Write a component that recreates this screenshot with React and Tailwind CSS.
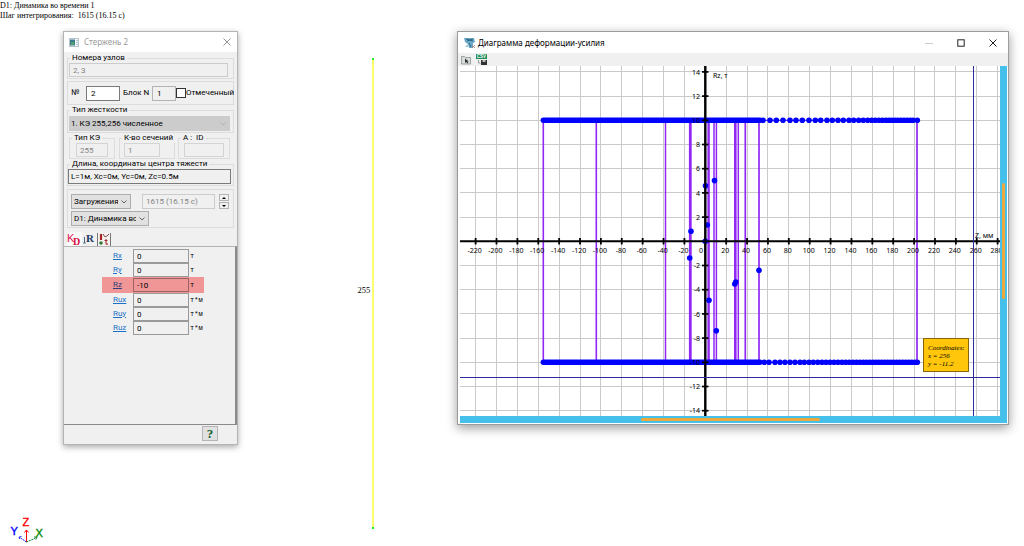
import { useState } from "react";

const forces = [
  { name: "Rx", value: "0", unit: "т" },
  { name: "Ry", value: "0", unit: "т" },
  { name: "Rz", value: "-10", unit: "т", active: true },
  { name: "Rux", value: "0", unit: "т*м" },
  { name: "Ruy", value: "0", unit: "т*м" },
  { name: "Ruz", value: "0", unit: "т*м" },
];

// Chart geometry, in viewBox units
const X0 = 245.3;
const Y0 = 175.3;
const STEP_X = 20.88;
const STEP_Y = 24.2;
const TOP = Y0 - 5 * STEP_Y;
const BOTTOM = Y0 + 5 * STEP_Y;

const xTicks = Array.from({ length: 26 }, (_, i) => (i - 11) * 20);
const yTicks = Array.from({ length: 15 }, (_, i) => (i - 7) * 2);

const loops = [
  { x: 83.3, w: 1.6 },
  { x: 136.3, w: 1.6 },
  { x: 205.5, w: 1.5 },
  { x: 230.3, w: 2.8 },
  { x: 248.6, w: 2.4 },
  { x: 254, w: 1.5 },
  { x: 256.4, w: 1.5 },
  { x: 275.3, w: 2.6 },
  { x: 278.3, w: 1.5 },
  { x: 285.3, w: 1.7 },
  { x: 299, w: 1.7 },
  { x: 457, w: 1.7 },
];

const points = [
  [245.5, 119.8],
  [254.5, 114.6],
  [247.3, 159],
  [231, 165.3],
  [245.3, 175.3],
  [229.7, 192],
  [249, 234.3],
  [256.3, 264.7],
  [274.8, 218],
  [275.8, 216],
  [299, 204.3],
];

const topDots = [
  303, 310, 316.3, 323, 330, 336, 342.3, 349, 355.3, 360.7, 367, 372.3, 378,
  383.3, 389, 393.7, 398.7, 403.3, 407.7, 411.7, 415.3, 419, 422.5, 426, 429,
  432, 435, 438, 441, 444, 447, 450, 453, 457.3,
];

const bottomDots = [
  304.3, 309, 315, 320, 325, 330, 335, 340, 344.3, 349, 353.3, 357.7, 362,
  366, 370, 374, 378, 382, 385.7, 389.3, 393, 396.5, 400, 403.3, 406.5, 409.7,
  412.7, 415.7, 418.7, 421.7, 424.7, 427.7, 430.7, 433.7, 436.7, 439.7, 442.7,
  445.7, 448.7, 451.7, 454.7, 457.3,
];

const Group = ({ title, className = "", children }) => (
  <fieldset className={`min-w-0 border border-[#dcdcdc] pb-px ${className}`}>
    <legend className="ml-[2px] whitespace-pre px-[2px] leading-[10px]">
      {title}
    </legend>
    {children}
  </fieldset>
);

const Select = ({ label, options, className = "" }) => (
  <div className={`relative ${className}`}>
    <select
      aria-label={label}
      className="block h-full w-full appearance-none overflow-hidden border border-[#adadad] bg-[#e1e1e1] pl-[2px] pr-3 leading-none"
    >
      {options.map((o) => (
        <option key={o}>{o}</option>
      ))}
    </select>
    <svg
      viewBox="0 0 6 4"
      className="pointer-events-none absolute right-1 top-1/2 h-1 w-[6px] -translate-y-1/2"
    >
      <path d="M.5 .5 3 3 5.5 .5" fill="none" stroke="#555" strokeWidth=".9" />
    </svg>
  </div>
);

const RodWindow = () => {
  const [marked, setMarked] = useState(false);

  return (
    <section className="absolute left-[63px] top-[31px] flex w-[175px] flex-col border border-[#b4b4b4] bg-[#f0f0f0] font-['Roboto',sans-serif] text-[8px] leading-[10px] text-black shadow-[0_2px_6px_rgba(0,0,0,0.35)]">
      <header className="flex h-5 items-center bg-white px-[5px] text-[#999]">
        <svg viewBox="0 0 10 9" className="h-[9px] w-[10px]">
          <rect x=".5" y=".5" width="9" height="8" fill="#f4f8fa" stroke="#b8c4cc" />
          <rect x="1" y="1.5" width="5" height="6" fill="#3b7a8c" />
          <rect x="2" y="4" width="3" height="3" fill="#52a06c" />
          <path d="M7 2.5h2M7 4.5h2M7 6.5h2" stroke="#9fb6c4" strokeWidth=".8" />
        </svg>
        <h2 className="ml-[5px] font-['Noto_Sans',sans-serif]">Стержень 2</h2>
        <button aria-label="Закрыть" className="ml-auto p-px">
          <svg viewBox="0 0 8 8" className="h-2 w-2">
            <path d="M.5 .5 7.5 7.5M7.5 .5 .5 7.5" stroke="#888" strokeWidth=".9" />
          </svg>
        </button>
      </header>

      <div className="px-[3px] pt-px">
        <Group title="Номера узлов">
          <input
            aria-label="Номера узлов"
            defaultValue="2, 3"
            disabled
            className="ml-px mr-1 block h-[14px] w-[159px] border border-[#ccc] px-[3px] text-[#838383]"
          />
        </Group>

        <div className="mt-[2px] flex h-6 items-center border border-[#dcdcdc] pl-[3px]">
          <label className="flex items-center">
            <span className="w-[15px]">№</span>
            <input
              defaultValue="2"
              className="h-[15px] w-[34px] border border-[#7a7a7a] bg-white px-1"
            />
          </label>
          <label className="ml-[3px] flex items-center">
            <span className="w-[29px]">Блок N</span>
            <input
              defaultValue="1"
              disabled
              className="h-[15px] w-6 border border-[#b4b4b4] px-1"
            />
          </label>
          <label className="flex items-center whitespace-nowrap">
            <input
              type="checkbox"
              checked={marked}
              onChange={() => setMarked(!marked)}
              className="h-[10px] w-[10px] appearance-none border border-[#333] bg-white checked:bg-[#333]"
            />
            <span>Отмеченный</span>
          </label>
        </div>

        <Group title="Тип жесткости" className="pt-px">
          <div className="relative mx-px mr-[3px]">
            <select
              aria-label="Тип жесткости"
              disabled
              className="block h-[15px] w-full appearance-none bg-[#cccccc] px-[2px] leading-none text-black opacity-100"
            >
              <option>1. КЭ 255,256 численное</option>
            </select>
            <svg
              viewBox="0 0 6 4"
              className="pointer-events-none absolute right-1 top-1/2 h-1 w-[6px] -translate-y-1/2"
            >
              <path d="M.5 .5 3 3 5.5 .5" fill="none" stroke="#aaa" strokeWidth=".8" />
            </svg>
          </div>
        </Group>

        <div className="mr-1 flex gap-[3px]">
          <Group title="Тип КЭ" className="ml-[2px] w-[46px]">
            <input
              aria-label="Тип КЭ"
              defaultValue="255"
              disabled
              className="mx-auto block h-[14px] w-8 border border-[#d4d4d4] px-[3px] text-[#838383]"
            />
          </Group>
          <Group title="К-во сечений" className="ml-px w-[56px]">
            <input
              aria-label="К-во сечений"
              defaultValue="1"
              disabled
              className="ml-1 block h-[14px] w-9 border border-[#d4d4d4] px-[3px] text-[#838383]"
            />
          </Group>
          <Group title="А :  ID" className="flex-1">
            <input
              aria-label="А : ID"
              disabled
              className="mx-auto block h-[14px] w-10 border border-[#d4d4d4]"
            />
          </Group>
        </div>

        <Group title="Длина, координаты центра тяжести">
          <input
            aria-label="Длина, координаты центра тяжести"
            readOnly
            defaultValue="L=1м, Xc=0м, Yc=0м, Zc=0.5м"
            className="block h-[15px] w-[163px] border border-[#7a7a7a] px-[2px]"
          />
        </Group>

        <div className="mt-[3px] border border-[#dcdcdc] pb-px pl-[3px] pr-1 pt-1">
          <div className="flex items-center">
            <Select label="Вид" options={["Загружения"]} className="h-[15px] w-16" />
            <input
              aria-label="Шаг интегрирования"
              disabled
              defaultValue="1615 (16.15 c)"
              className="ml-[11px] h-[15px] w-[73px] border border-[#ccc] px-[3px] text-[#838383]"
            />
            <div className="ml-1 flex flex-col gap-px">
              <button
                aria-label="Следующий шаг"
                className="flex h-[7px] w-[10px] items-center justify-center border border-[#b4b4b4]"
              >
                <svg viewBox="0 0 4 2" className="h-[2px] w-1">
                  <path d="M0 2 2 0 4 2z" />
                </svg>
              </button>
              <button
                aria-label="Предыдущий шаг"
                className="flex h-[7px] w-[10px] items-center justify-center border border-[#b4b4b4]"
              >
                <svg viewBox="0 0 4 2" className="h-[2px] w-1">
                  <path d="M0 0 2 2 4 0z" />
                </svg>
              </button>
            </div>
          </div>
          <Select
            label="Загружение"
            options={["D1: Динамика во времени 1"]}
            className="mt-[2px] h-[15px] w-[78px]"
          />
        </div>
      </div>

      <nav className="mt-1 flex h-[14px] items-end pl-[3px]">
        <button aria-label="KD" className="h-[14px] w-[15px] bg-[#fafafa]">
          <svg viewBox="0 0 15 14" className="h-full w-full">
            <text x="0" y="10" fontSize="11" fill="#e0144c" fontFamily="Liberation Sans">K</text>
            <text x="6" y="13" fontSize="10" fontWeight="bold" fill="#d01040" fontFamily="Liberation Serif">D</text>
          </svg>
        </button>
        <button aria-label="R" className="h-[14px] w-[14px]">
          <svg viewBox="0 0 14 14" className="h-full w-full">
            <path d="M2.5 5v6" stroke="#446688" strokeWidth="1" />
            <path d="M1 11h3" stroke="#446688" strokeWidth=".8" />
            <text x="4" y="10" fontSize="11" fontWeight="bold" fill="#1f3a63" fontFamily="Liberation Serif">R</text>
          </svg>
        </button>
        <button
          aria-label="График"
          className="ml-px h-[13px] w-[14px] border-x border-[#777] bg-[#f6f2f0]"
        >
          <svg viewBox="0 0 12 13" className="h-full w-full">
            <path d="M3 1v6" stroke="#a82222" strokeWidth="2.200" />
            <circle cx="3" cy="10" r="1.8" fill="#2e7a3c" />
            <path d="M5 1 7 4 9 3 11 1" stroke="#7a5050" strokeWidth="1" fill="none" />
            <path d="M8 6v4.500q0 1 2 .5M6.500 7.500h3" stroke="#a03030" strokeWidth="1.100" fill="none" />
          </svg>
        </button>
      </nav>

      <div className="flex flex-col border-b border-r-2 border-t border-b-[#8a8a8a] border-r-[#8a8a8a] border-t-[#b4b4b4] pb-[89px] pt-[2px]">
        {forces.map((f) => (
          <div
            key={f.name}
            className={`ml-[38px] flex w-[102px] items-center pl-[11px] ${
              f.active ? "h-4 bg-[#f09696]" : "h-[14px]"
            }`}
          >
            <a
              href={`#${f.name}`}
              className={`w-5 underline ${f.active ? "text-[#2f3f78]" : "text-[#1a72c8]"}`}
            >
              {f.name}
            </a>
            <input
              aria-label={f.name}
              readOnly
              defaultValue={f.value}
              className={`h-[14px] w-14 border px-[3px] ${
                f.active ? "border-[#9a6464]" : "border-[#9a9a9a]"
              }`}
            />
            <span className="ml-px font-['Liberation_Mono',monospace] text-[7px] leading-[10px]">
              {f.unit}
            </span>
          </div>
        ))}
      </div>

      <footer className="flex justify-end pb-[3px] pr-[19px] pt-px">
        <button
          aria-label="Справка"
          className="h-[15px] w-4 border border-[#b4b4b4] bg-[#e1e1e1] font-['Liberation_Serif',serif] text-[13px] font-bold leading-[12px] text-[#14602a]"
        >
          ?
        </button>
      </footer>
    </section>
  );
};

const Chart = () => (
  <svg
    viewBox="0 0 540 350"
    className="block min-w-0 flex-1 bg-white font-['Noto_Sans',sans-serif]"
  >
    {/* Grid */}
    {xTicks.map((v) => {
      const x = Math.floor(X0 + (v / 20) * STEP_X) + 0.5;
      return <path key={v} d={`M${x} 0V350`} stroke="#cacaca" />;
    })}
    {yTicks.map((v) => {
      const y = Math.floor(Y0 - (v / 2) * STEP_Y) + 0.5;
      return <path key={v} d={`M0 ${y}H540`} stroke="#cacaca" />;
    })}

    {/* Hysteresis loops */}
    {loops.map((l) => (
      <path
        key={l.x}
        d={`M${l.x} ${TOP}V${BOTTOM}`}
        stroke="#9127f5"
        strokeWidth={l.w}
      />
    ))}

    {/* Axes */}
    <path d={`M0 ${Y0}H540M${X0} 0V350`} stroke="#000" strokeWidth="2" />
    {xTicks.map((v) => {
      const x = X0 + (v / 20) * STEP_X;
      return <path key={v} d={`M${x} 172v6.500`} stroke="#000" strokeWidth="1.8" />;
    })}

    <path d={`M83.300 ${TOP}H457.500M83.300 ${BOTTOM}H457.500`} stroke="#4a10f8" />
    <path
      d={`M83.300 ${TOP}H300M83.300 ${BOTTOM}H300`}
      stroke="#0000ff"
      strokeWidth="5.4"
      strokeLinecap="round"
    />
    {topDots.map((x) => (
      <circle key={x} cx={x} cy={TOP} r="2.800" fill="#0000ff" />
    ))}
    {bottomDots.map((x) => (
      <circle key={x} cx={x} cy={BOTTOM} r="2.800" fill="#0000ff" />
    ))}
    {points.map(([x, y]) => (
      <circle key={`${x}-${y}`} cx={x} cy={y} r="2.800" fill="#0000ff" />
    ))}
    <path d="M245.300 0V350" stroke="#000" strokeWidth="2" />
    {yTicks.map((v) => {
      const y = Y0 - (v / 2) * STEP_Y;
      return <path key={v} d={`M242 ${y}h6.500`} stroke="#000" strokeWidth="1.7" />;
    })}

    {/* Labels */}
    {xTicks.map((v) => (
      <text
        key={v}
        x={v === 0 ? 241 : X0 + (v / 20) * STEP_X - 1}
        y="186.500"
        fontSize="7"
        textAnchor="middle"
      >
        {v}
      </text>
    ))}
    {yTicks
      .filter((v) => v !== 0)
      .map((v) => (
        <text
          key={v}
          x="240"
          y={Y0 - (v / 2) * STEP_Y + 2.7}
          fontSize="7"
          textAnchor="end"
        >
          {v}
        </text>
      ))}
    <text x="253" y="12" fontSize="7">Rz, т</text>
    <text x="515" y="172" fontSize="7">Z, мм</text>

    {/* Cursor */}
    <path d="M513.500 0V350M0 311.500H540" stroke="#2c2c9c" />
  </svg>
);

const ChartWindow = () => (
  <section className="absolute left-[457px] top-[31px] flex w-[552px] flex-col border border-[#9c9c9c] bg-white font-['Noto_Sans',sans-serif] text-black shadow-[0_3px_10px_rgba(0,0,0,0.4)]">
    <header className="flex h-[21px] items-center pl-[6px] pr-[11px]">
      <svg viewBox="0 0 12 12" className="h-3 w-3">
        <path d="M0 1h10l1 4-2 1v5H5L4 7 1 5z" fill="#6aa9c8" />
        <path d="M2 2 9 4M3 4l6-2M5 6l2 4" stroke="#28607e" strokeWidth=".9" />
        <path d="M1 10l3-3v3z" fill="#9cc6da" />
        <path d="M8 8l3 3M11 8 8 11" stroke="#b07a7a" strokeWidth=".8" />
      </svg>
      <h2 className="ml-[2px] text-[8px] leading-[12px]">Диаграмма деформации-усилия</h2>
      <div className="ml-auto flex items-center gap-6">
        <button aria-label="Свернуть">
          <svg viewBox="0 0 8 8" className="h-2 w-2">
            <path d="M0 4.500h8" stroke="#ccc" />
          </svg>
        </button>
        <button aria-label="Развернуть">
          <svg viewBox="0 0 8 8" className="h-2 w-2">
            <rect x=".8" y=".8" width="6.400" height="6.400" fill="none" stroke="#222" />
          </svg>
        </button>
        <button aria-label="Закрыть">
          <svg viewBox="0 0 8 8" className="h-2 w-2">
            <path d="M.5 .5 7.5 7.5M7.5 .5 .5 7.5" stroke="#222" />
          </svg>
        </button>
      </div>
    </header>

    <div className="flex h-[13px] items-center gap-[5px] bg-[#f0f0f0] pl-[3px]">
      <button aria-label="Копировать изображение">
        <svg viewBox="0 0 10 10" className="h-[10px] w-[10px]">
          <path d="M.5 1.500h3l1 1h5v6.500h-9z" fill="#d8dedc" stroke="#8a9290" strokeWidth=".8" />
          <path d="M4 3.500v4.500l1.300-1 1 1.500 1-.6-1-1.500h1.500z" fill="#333" />
        </svg>
      </button>
      <button aria-label="Сохранить в CSV">
        <svg viewBox="0 0 12 12" className="h-3 w-3">
          <rect x="0" y="0" width="11" height="5" fill="#1c8a5a" />
          <text x="5.500" y="4.300" fontSize="4.500" fontWeight="bold" textAnchor="middle" fill="#fff" fontFamily="Liberation Sans">CSV</text>
          <rect x="5" y="6" width="6" height="5" fill="#333" />
          <rect x="6.500" y="6" width="3" height="2" fill="#bbb" />
          <path d="M2.500 6v3h2" stroke="#888" strokeWidth=".8" fill="none" />
        </svg>
      </button>
    </div>

    <div className="relative mb-px ml-[2px] mr-px border-b-[7px] border-[#45c0ea]">
      <div className="flex">
        <Chart />
        <div className="w-[7px] bg-[#45c0ea] px-[2px] pt-[117px]">
          <div className="h-[116px] rounded-full bg-[#eba83c]" />
        </div>
      </div>
      <div className="absolute -bottom-[5px] left-[33%] h-[3px] w-[179px] rounded-full bg-[#eba83c]" />
      <div className="absolute bottom-[44px] right-[38px] w-[46px] border border-[#86640a] bg-[#ffc60c] pb-[3px] pl-1 pt-[5px] font-['Liberation_Serif',serif] text-[7px] italic leading-[8px]">
        <p>Coordinates:</p>
        <p>x = 256</p>
        <p>y = -11.2</p>
      </div>
    </div>
  </section>
);

const App = () => {
  return (
    <main className="relative min-h-screen w-full overflow-hidden bg-white pt-px font-['Liberation_Serif',serif] text-[8px] leading-[10px] text-black">
      <p>D1: Динамика во времени 1</p>
      <p className="whitespace-pre">Шаг интегрирования:  1615 (16.15 с)</p>

      {/* Rod element in the model view */}
      <svg viewBox="0 0 20 474" className="absolute left-[356px] top-[56px] h-[474px] w-5">
        <path d="M17 3V472" stroke="#ffff50" strokeWidth="1.700" />
        <rect x="16" y="2" width="2" height="2" fill="#20f020" />
        <rect x="16" y="471" width="2" height="2" fill="#20f020" />
        <text x="1.500" y="237" fontSize="8.500">255</text>
      </svg>

      <RodWindow />
      <ChartWindow />

      {/* Axis triad */}
      <svg
        viewBox="0 0 38 30"
        className="absolute bottom-0 left-[8px] h-[30px] w-[38px] font-['Liberation_Sans',sans-serif]"
        fontSize="11"
      >
        <path d="M18.500 26V14M16.500 16.500l2-2.500 2 2.500" stroke="#f00" fill="none" />
        <path d="M18.500 26 11 21M13.500 20.500 11 21l.8 2.500" stroke="#22f" fill="none" strokeDasharray="2 .6" />
        <path d="M18.500 26 29 21.500M26 20.800l3 .7-1.500 2.500" stroke="#1c8a3c" fill="none" strokeDasharray="2 .6" />
        <text x="14.500" y="10" fill="#f00" stroke="#f00" strokeWidth=".4">Z</text>
        <text x="2.500" y="19" fill="#00f" stroke="#00f" strokeWidth=".4">Y</text>
        <text x="27.500" y="21" fill="#080" stroke="#080" strokeWidth=".4">X</text>
      </svg>
    </main>
  );
};

export default App;
